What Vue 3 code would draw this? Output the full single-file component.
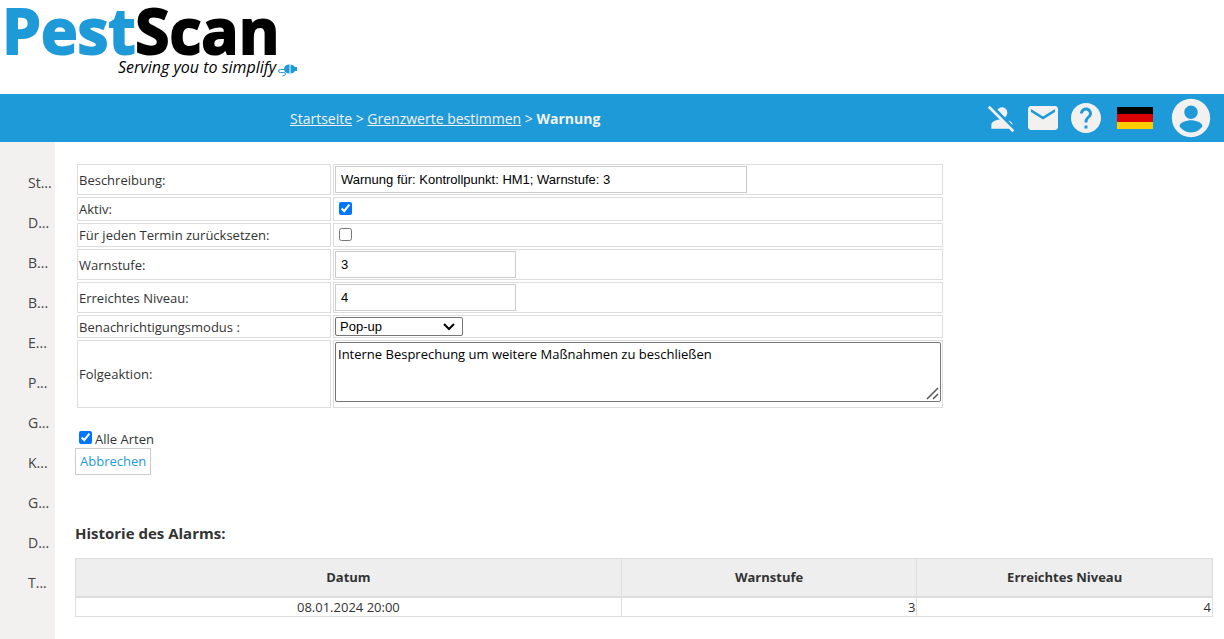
<script setup>
import { ref } from 'vue'

const menu = ['St...', 'D...', 'B...', 'B...', 'E...', 'P...', 'G...', 'K...', 'G...', 'D...', 'T...']
const description = ref('Warnung für: Kontrollpunkt: HM1; Warnstufe: 3')
const active = ref(true)
const reset = ref(false)
const level = ref('3')
const reached = ref('4')
const mode = ref('Pop-up')
const action = ref('Interne Besprechung um weitere Maßnahmen zu beschließen')
const allSpecies = ref(true)
const history = [{ date: '08.01.2024 20:00', level: 3, reached: 4 }]
</script>

<template>
  <div class="page">
    <header class="brand">
      <svg class="logo" width="310" height="94" viewBox="0 0 310 94" role="img" aria-label="PestScan">
        <text class="name" x="2" y="54"><tspan class="blue">Pest</tspan><tspan class="black">Scan</tspan></text>
        <text class="tagline" x="118" y="73">Serving you to simplify</text>
        <path d="M284 69.500h-3.500q-2 0-2 1.500t2 1.500h3q2 0 2 1.500t-3 2" fill="none" stroke="#1f9ad9" />
        <path d="M289.500 64.500v9h-1.500q-4-1-4-4.500t4-4.500zM290.500 64.500v9q3 0 4.500-2.500h2v-4h-2q-1.500-2.500-4.500-2.500z" fill="#1f9ad9" />
      </svg>
    </header>

    <div class="bar">
      <nav class="crumbs" aria-label="Pfad">
        <a href="#">Startseite</a> &gt; <a href="#">Grenzwerte bestimmen</a> &gt; <strong>Warnung</strong>
      </nav>
      <div class="tools">
        <button type="button" aria-label="Benutzer aus">
          <svg width="32" height="32" viewBox="0 0 24 24">
            <path d="M8.650 5.820C9.360 4.720 10.600 4 12 4c2.210 0 4 1.790 4 4 0 1.400-.72 2.640-1.820 3.350L8.650 5.820zM20 17.170c-.02-1.100-.63-2.110-1.610-2.620-.54-.28-1.130-.54-1.770-.76L20 17.170zm1.190 4.020L2.810 2.810 1.390 4.220l8.890 8.890c-1.810.23-3.390.79-4.670 1.450C4.610 15.070 4 16.100 4 17.220V20h13.170l2.610 2.610 1.410-1.420z" />
          </svg>
        </button>
        <button type="button" aria-label="Nachrichten">
          <svg width="36" height="36" viewBox="0 0 24 24">
            <path d="M20 4H4c-1.100 0-1.990.9-1.990 2L2 18c0 1.100.9 2 2 2h16c1.100 0 2-.9 2-2V6c0-1.100-.9-2-2-2zm0 4l-8 5-8-5V6l8 5 8-5v2z" />
          </svg>
        </button>
        <button type="button" aria-label="Hilfe">
          <svg width="36" height="36" viewBox="0 0 24 24">
            <path d="M12 2C6.480 2 2 6.480 2 12s4.480 10 10 10 10-4.480 10-10S17.520 2 12 2zm1 17h-2v-2h2v2zm2.070-7.750l-.9.920C13.450 12.900 13 13.500 13 15h-2v-.5c0-1.100.45-2.100 1.170-2.830l1.240-1.260c.37-.36.59-.86.59-1.410 0-1.100-.9-2-2-2s-2 .9-2 2H8c0-2.210 1.790-4 4-4s4 1.790 4 4c0 .88-.36 1.680-.93 2.250z" />
          </svg>
        </button>
        <button type="button" class="flag" aria-label="Deutsch">
          <svg width="36" height="22" viewBox="0 0 36 22" shape-rendering="crispEdges">
            <path d="M0 0h36v7H0z" fill="#000" />
            <path d="M0 7h36v8H0z" fill="#d00" />
            <path d="M0 15h36v7H0z" fill="#ffce00" />
          </svg>
        </button>
        <button type="button" aria-label="Konto">
          <svg width="46" height="46" viewBox="0 0 24 24">
            <path d="M12 2C6.480 2 2 6.480 2 12s4.480 10 10 10 10-4.480 10-10S17.520 2 12 2zm0 3.500c1.930 0 3.500 1.570 3.500 3.500s-1.570 3.500-3.500 3.500S8.500 10.930 8.500 9s1.570-3.500 3.500-3.500zm0 14c-2.500 0-4.710-1.280-6-3.220.03-1.990 4-3.080 6-3.080 1.990 0 5.970 1.090 6 3.080-1.290 1.940-3.500 3.220-6 3.220z" />
          </svg>
        </button>
      </div>
    </div>

    <div class="body">
      <nav class="side" aria-label="Menü">
        <a v-for="(item, i) in menu" :key="i" href="#">{{ item }}</a>
      </nav>

      <main>
        <form @submit.prevent>
          <table class="fields">
            <tbody>
              <tr>
                <td><label for="description">Beschreibung:</label></td>
                <td><input id="description" v-model="description" class="box wide" type="text" /></td>
              </tr>
              <tr>
                <td><label for="active">Aktiv:</label></td>
                <td><input id="active" v-model="active" class="tick" type="checkbox" /></td>
              </tr>
              <tr>
                <td><label for="reset">Für jeden Termin zurücksetzen:</label></td>
                <td><input id="reset" v-model="reset" class="tick" type="checkbox" /></td>
              </tr>
              <tr>
                <td><label for="level">Warnstufe:</label></td>
                <td><input id="level" v-model="level" class="box" type="text" /></td>
              </tr>
              <tr>
                <td><label for="reached">Erreichtes Niveau:</label></td>
                <td><input id="reached" v-model="reached" class="box" type="text" /></td>
              </tr>
              <tr>
                <td><label for="mode">Benachrichtigungsmodus :</label></td>
                <td>
                  <div class="select">
                    <select id="mode" v-model="mode">
                      <option>Pop-up</option>
                    </select>
                    <svg class="chevron" width="12" height="8" viewBox="0 0 12 8" aria-hidden="true">
                      <path d="M1 1l5 5l5-5" fill="none" stroke="#000" stroke-width="2" />
                    </svg>
                  </div>
                </td>
              </tr>
              <tr class="tall">
                <td><label for="action">Folgeaktion:</label></td>
                <td>
                  <div class="area">
                    <textarea id="action" v-model="action"></textarea>
                    <svg class="grip" width="13" height="13" viewBox="0 0 13 13" aria-hidden="true">
                      <path d="M1 12L12 1M7 12l5-5" fill="none" stroke="#555" stroke-width="1.500" />
                    </svg>
                  </div>
                </td>
              </tr>
            </tbody>
          </table>

          <label class="all"><input v-model="allSpecies" type="checkbox" />Alle Arten</label>
          <button type="button" class="cancel">Abbrechen</button>
        </form>

        <h2>Historie des Alarms:</h2>
        <table class="history">
          <thead>
            <tr>
              <th class="date">Datum</th>
              <th>Warnstufe</th>
              <th>Erreichtes Niveau</th>
            </tr>
          </thead>
          <tbody>
            <tr v-for="row in history" :key="row.date">
              <td class="date">{{ row.date }}</td>
              <td>{{ row.level }}</td>
              <td>{{ row.reached }}</td>
            </tr>
          </tbody>
        </table>
      </main>
    </div>
  </div>
</template>

<style>
body {
  margin: 0;
  background: #fff;
}
</style>

<style scoped>
.page {
  display: flex;
  flex-direction: column;
  min-height: 100vh;
  font-family: "Open Sans", "Noto Sans", sans-serif;
  font-size: 13px;
  line-height: 18px;
  color: #333;
}

.page *,
.page {
  box-sizing: border-box;
}

.logo {
  display: block;
  overflow: visible;
}

.name {
  font-size: 62px;
  font-weight: 700;
  stroke-width: 2px;
}

.blue {
  fill: #1f9ad9;
  stroke: #1f9ad9;
}

.black {
  fill: #000;
  stroke: #000;
}

.tagline {
  font-size: 16px;
  font-style: italic;
  fill: #000;
}

.bar {
  display: flex;
  align-items: center;
  justify-content: space-between;
  height: 48px;
  padding: 0 10px 0 290px;
  background: #1f9ad9;
  color: #f2f1ef;
}

.crumbs {
  padding-top: 2px;
  font-size: 14px;
}

.crumbs a {
  color: inherit;
}

.tools {
  display: flex;
  align-items: center;
  gap: 7px;
}

.tools button {
  display: block;
  padding: 0;
  border: 0;
  background: none;
}

.tools .flag {
  margin: 0 8px 0 6px;
}

.tools svg {
  display: block;
  fill: #f2f1ef;
}

.body {
  display: flex;
  flex: 1;
}

.side {
  flex: none;
  width: 55px;
  padding-top: 21px;
  background: #f2f1ef;
}

.side a {
  display: block;
  padding-left: 28px;
  font-size: 14px;
  line-height: 40px;
  color: #444;
  text-decoration: none;
}

main {
  flex: 1;
  min-width: 0;
  padding: 20px 11px 20px 20px;
}

.fields {
  width: 100%;
  max-width: 870px;
  border-spacing: 2px;
}

.fields td {
  height: 23px;
  padding: 1px;
  border: 1px solid #ddd;
}

.fields td:first-child {
  width: 254px;
}

.fields .tall td {
  height: 68px;
}

.fields .tall td + td {
  vertical-align: top;
}

.box {
  display: block;
  width: 181px;
  height: 27px;
  padding: 0 5px;
  border: 1px solid #ccc;
  font-family: "Liberation Sans", Arial, sans-serif;
  font-size: 13px;
  color: #000;
}

.wide {
  width: 412px;
}

.tick {
  display: block;
  margin: 3px 4px 4px;
}

.select {
  position: relative;
  width: 128px;
}

select {
  display: block;
  width: 100%;
  height: 19px;
  padding: 0 4px;
  border: 1px solid #767676;
  border-radius: 2px;
  appearance: none;
  background: #fff;
  font-family: "Liberation Sans", Arial, sans-serif;
  font-size: 13px;
  color: #000;
}

.chevron {
  position: absolute;
  top: 6px;
  right: 8px;
  pointer-events: none;
}

.area {
  position: relative;
}

.grip {
  position: absolute;
  right: 2px;
  bottom: 2px;
  pointer-events: none;
}

textarea {
  display: block;
  width: 100%;
  height: 60px;
  padding: 2px;
  border: 1px solid #767676;
  border-radius: 2px;
  resize: none;
  font: inherit;
  color: #000;
}

.all {
  display: flex;
  align-items: center;
  width: max-content;
  margin-top: 20px;
}

.all input {
  margin: 0 3px 3px 4px;
}

.cancel {
  display: block;
  height: 27px;
  padding: 0 4px 2px;
  border: 1px solid #ccc;
  background: #fff;
  font: inherit;
  color: #1f9ad9;
}

h2 {
  margin: 47px 0 14px;
  font-size: 15px;
  line-height: 22px;
}

.history {
  width: 100%;
  border-collapse: collapse;
  table-layout: fixed;
}

.history th,
.history td {
  border: 1px solid #ddd;
  padding: 1px;
}

.history th {
  height: 38px;
  border-bottom-width: 2px;
  background: #eee;
}

.history td {
  height: 20px;
  padding: 0 1px;
  text-align: right;
}

.history .date {
  width: 48%;
  text-align: center;
}
</style>
